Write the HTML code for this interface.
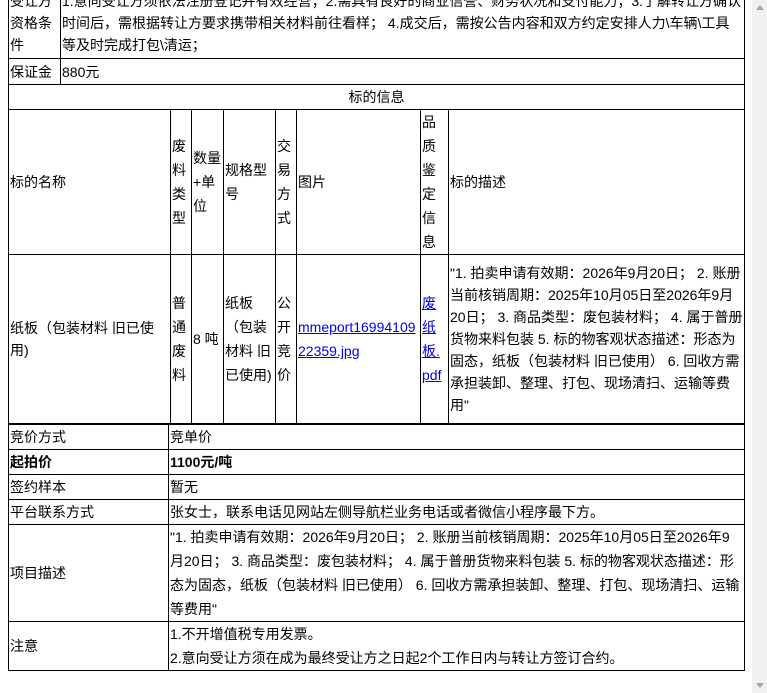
<!DOCTYPE html>
<html><head><meta charset="utf-8"><style>
html,body{margin:0;padding:0;width:767px;height:693px;overflow:hidden;background:#fff;}
body{font-family:"Liberation Sans","Noto Sans CJK SC",sans-serif;font-size:14px;color:#000;position:relative;}
table{border-collapse:collapse;position:absolute;left:8px;width:737px;table-layout:fixed;}
td{border:1px solid #000;padding:0 1px;vertical-align:middle;line-height:22px;word-break:break-all;}
td.n{word-break:normal;overflow-wrap:anywhere;}
a{color:#0000ee;text-decoration:underline;}
.v td.h{line-height:24px;}
#sb{position:absolute;left:752px;top:0;width:15px;height:693px;background:#f1f1f1;}
#th{position:absolute;left:755px;top:200px;width:9px;height:482px;background:#c1c1c1;border-radius:5px;}
</style></head><body>
<table style="top:-14px">
<col style="width:52px"><col>
<tr style="height:72px"><td>受让方资格条件</td><td class="n">1.意向受让方须依法注册登记并有效经营；2.需具有良好的商业信誉、财务状况和支付能力；3.了解转让方确认时间后，需根据转让方要求携带相关材料前往看样； 4.成交后，需按公告内容和双方约定安排人力\车辆\工具等及时完成打包\清运；</td></tr>
<tr style="height:26px"><td>保证金</td><td>880元</td></tr>
</table>
<table class="v" style="top:84px">
<col style="width:162px"><col style="width:21px"><col style="width:32px"><col style="width:52px"><col style="width:21px"><col style="width:124px"><col style="width:28px"><col>
<tr style="height:25px"><td colspan="8" style="text-align:center">标的信息</td></tr>
<tr style="height:145px"><td>标的名称</td><td class="h">废料类型</td><td class="h">数量+单位</td><td class="h">规格型号</td><td class="h">交易方式</td><td>图片</td><td class="h">品质鉴定信息</td><td>标的描述</td></tr>
<tr style="height:169px"><td>纸板（包装材料 旧已使用)</td><td class="h">普通废料</td><td>8 吨</td><td class="h">纸板（包装材料 旧已使用)</td><td class="h">公开竞价</td><td class="h"><a>mmeport1699410922359.jpg</a></td><td class="h"><a>废纸板.pdf</a></td><td class="n">"1. 拍卖申请有效期：2026年9月20日； 2. 账册当前核销周期：2025年10月05日至2026年9月20日； 3. 商品类型：废包装材料； 4. 属于普册货物来料包装 5. 标的物客观状态描述：形态为固态，纸板（包装材料 旧已使用） 6. 回收方需承担装卸、整理、打包、现场清扫、运输等费用"</td></tr>
</table>
<table style="top:424px">
<col style="width:160px"><col>
<tr style="height:25px"><td>竞价方式</td><td>竞单价</td></tr>
<tr style="height:25px"><td><b>起拍价</b></td><td><b>1100元/吨</b></td></tr>
<tr style="height:25px"><td>签约样本</td><td>暂无</td></tr>
<tr style="height:25px"><td>平台联系方式</td><td>张女士，联系电话见网站左侧导航栏业务电话或者微信小程序最下方。</td></tr>
<tr style="height:97px"><td>项目描述</td><td class="n" style="line-height:24px">"1. 拍卖申请有效期：2026年9月20日； 2. 账册当前核销周期：2025年10月05日至2026年9月20日； 3. 商品类型：废包装材料； 4. 属于普册货物来料包装 5. 标的物客观状态描述：形态为固态，纸板（包装材料 旧已使用） 6. 回收方需承担装卸、整理、打包、现场清扫、运输等费用"</td></tr>
<tr style="height:49px"><td>注意</td><td style="line-height:24px">1.不开增值税专用发票。<br>2.意向受让方须在成为最终受让方之日起2个工作日内与转让方签订合约。</td></tr>
</table>
<div id="sb"><div id="th"></div>
<div style="position:absolute;left:4px;top:5px;width:0;height:0;border-left:4px solid transparent;border-right:4px solid transparent;border-bottom:5px solid #a3a3a3"></div>
<div style="position:absolute;left:4px;top:683px;width:0;height:0;border-left:4px solid transparent;border-right:4px solid transparent;border-top:5px solid #a3a3a3"></div>
</div>
</body></html>
